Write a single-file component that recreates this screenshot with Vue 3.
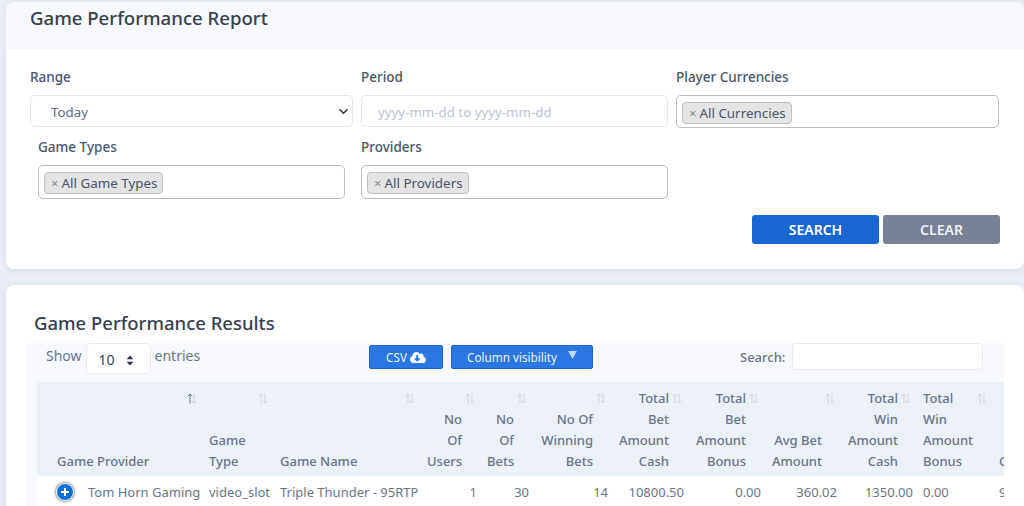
<script setup>
const columns = [
  { key: 'provider', lines: ['Game Provider'], cls: 'left first', active: true },
  { key: 'type', lines: ['Game', 'Type'], cls: 'left' },
  { key: 'name', lines: ['Game Name'], cls: 'left' },
  { key: 'users', lines: ['No', 'Of', 'Users'], cls: '' },
  { key: 'bets', lines: ['No', 'Of', 'Bets'], cls: '' },
  { key: 'winning', lines: ['No Of', 'Winning', 'Bets'], cls: '' },
  { key: 'betcash', lines: ['Total', 'Bet', 'Amount', 'Cash'], cls: '' },
  { key: 'betbonus', lines: ['Total', 'Bet', 'Amount', 'Bonus'], cls: '' },
  { key: 'avg', lines: ['Avg Bet', 'Amount'], cls: '' },
  { key: 'wincash', lines: ['Total', 'Win', 'Amount', 'Cash'], cls: '' },
  { key: 'winbonus', lines: ['Total', 'Win', 'Amount', 'Bonus'], cls: 'left' },
  { key: 'ggr', lines: ['GGR'], cls: 'left' }
]
const row = [
  { v: 'video_slot', cls: 'left' },
  { v: 'Triple Thunder - 95RTP', cls: 'left' },
  { v: '1', cls: '' },
  { v: '30', cls: '' },
  { v: '14', cls: '' },
  { v: '10800.50', cls: '' },
  { v: '0.00', cls: '' },
  { v: '360.02', cls: '' },
  { v: '1350.00', cls: '' },
  { v: '0.00', cls: 'left' },
  { v: '9450.50', cls: 'left' }
]
</script>

<template>
  <div class="page">
    <section class="card report">
      <header class="report-head"><h1>Game Performance Report</h1></header>
      <form class="filters" @submit.prevent>
        <div class="field">
          <label>Range</label>
          <div class="select-wrap">
            <select class="control range"><option>Today</option></select>
            <svg class="chevron" viewBox="0 0 12 8" width="11" height="7"><path d="M1.5 1.5 6 6l4.5-4.5" fill="none" stroke="#2b3445" stroke-width="1.8"/></svg>
          </div>
        </div>
        <div class="field">
          <label>Period</label>
          <input class="control period" placeholder="yyyy-mm-dd to yyyy-mm-dd" />
        </div>
        <div class="field">
          <label>Player Currencies</label>
          <div class="multi tall"><span class="chip"><i>×</i>All Currencies</span></div>
        </div>
        <div class="field inset">
          <label>Game Types</label>
          <div class="multi"><span class="chip"><i>×</i>All Game Types</span></div>
        </div>
        <div class="field">
          <label>Providers</label>
          <div class="multi"><span class="chip"><i>×</i>All Providers</span></div>
        </div>
      </form>
      <div class="actions">
        <button class="btn search">SEARCH</button>
        <button class="btn clear">CLEAR</button>
      </div>
    </section>

    <section class="card results">
      <h2>Game Performance Results</h2>
      <div class="table-box">
        <div class="tools">
          <div class="length">
            <span>Show</span>
            <div class="len-select">10
              <svg viewBox="0 0 8 12" width="8" height="11"><path d="M4 0.5 7.6 4.6H.4zM4 11.5.4 7.4h7.2z" fill="#2b3445"/></svg>
            </div>
            <span>entries</span>
          </div>
          <div class="tool-btns">
            <button class="tbtn csv">CSV
              <svg viewBox="0 0 640 512" width="16" height="13"><path fill="#fff" d="M537.6 226.6c4.1-10.7 6.4-22.4 6.4-34.6 0-53-43-96-96-96-19.7 0-38.1 6-53.3 16.2C367 64.2 315.3 32 256 32c-88.4 0-160 71.6-160 160 0 2.7.1 5.4.2 8.1C40.2 219.8 0 273.2 0 336c0 79.5 64.5 144 144 144h368c70.7 0 128-57.3 128-128 0-61.9-44-113.6-102.4-125.4zm-132.9 88.7L299.3 420.7c-6.2 6.2-16.4 6.2-22.6 0L171.3 315.3c-10.1-10.1-2.9-27.3 11.3-27.3H248V176c0-8.8 7.2-16 16-16h48c8.8 0 16 7.2 16 16v112h65.4c14.2 0 21.4 17.2 11.3 27.3z"/></svg>
            </button>
            <button class="tbtn vis">Column visibility
              <svg viewBox="0 0 10 9" width="9" height="8"><path d="M0 0h10L5 9z" fill="#c3d7f5"/></svg>
            </button>
          </div>
          <div class="table-search">
            <label>Search:</label>
            <input />
          </div>
        </div>
        <table>
          <colgroup>
            <col class="c1" /><col class="c2" /><col class="c3" /><col class="c4" /><col class="c5" /><col class="c6" />
            <col class="c7" /><col class="c8" /><col class="c9" /><col class="c10" /><col class="c11" /><col class="c12" />
          </colgroup>
          <thead>
            <tr>
              <th v-for="c in columns" :key="c.key" :class="c.cls">
                <span v-for="l in c.lines" :key="l" class="hl">{{ l }}</span>
                <svg class="sort" viewBox="0 0 10 11" width="10" height="11">
                  <path d="M3 10.5V1M.8 3.2 3 1l2.2 2.2" fill="none" :stroke="c.active ? '#69758a' : '#ccd3df'" stroke-width="1"/>
                  <path d="M7 .5V10M4.8 7.8 7 10l2.2-2.2" fill="none" stroke="#ccd3df" stroke-width="1"/>
                </svg>
              </th>
            </tr>
          </thead>
          <tbody>
            <tr>
              <td class="left provider"><span class="plus"></span>Tom Horn Gaming</td>
              <td v-for="(d, i) in row" :key="i" :class="d.cls">{{ d.v }}</td>
            </tr>
          </tbody>
        </table>
      </div>
    </section>
  </div>
</template>

<style>
html, body { margin: 0; background: #e9edf5; }
</style>

<style scoped>
* { box-sizing: border-box; }
.page {
  width: 1024px;
  height: 506px;
  overflow: hidden;
  padding: 2px 0 0 6px;
  background: #e9edf5;
  font-family: "Noto Sans", "Liberation Sans", sans-serif;
  color: #5f6b80;
}
.card {
  background: #fff;
  width: 1018px;
  border-radius: 8px;
  box-shadow: 0 2px 6px rgba(60, 75, 110, .10);
}
.report { height: 267px; }
.report-head {
  height: 48px;
  background: #f8f9fc;
  padding: 3px 24px 0;
  border-radius: 8px 8px 0 0;
}
h1 {
  margin: 0;
  font-size: 18.6px;
  line-height: 26px;
  font-weight: 500;
  color: #36404f;
}
.filters {
  display: grid;
  grid-template-columns: 323px 307px 323px;
  column-gap: 8px;
  row-gap: 2px;
  grid-template-rows: 68px 64px;
  padding: 17px 0 0 24px;
}
.field { min-width: 0; position: relative; }
.field label {
  display: block;
  font-size: 13.5px;
  line-height: 20px;
  font-weight: 500;
  color: #4a5568;
  margin-bottom: 8px;
}
.field.inset { margin: 0 8px; }
.select-wrap { position: relative; }
.chevron { position: absolute; right: 4px; top: 13px; }
.control {
  display: block;
  width: 100%;
  height: 32px;
  border: 1px solid #e2e7f2;
  border-radius: 5px;
  background: #fff;
  font-family: inherit;
  font-size: 13.3px;
  color: #5f6b80;
  outline: none;
}
.range { appearance: none; padding: 1px 0 0 20px; }
.period { padding: 1px 0 0 16px; }
.period::placeholder { color: #bcc3d2; opacity: 1; }
.multi {
  height: 34px;
  border: 1px solid #b9bdc4;
  border-radius: 5px;
  padding: 5px;
  background: #fff;
}
.multi.tall { height: 33px; }
.chip {
  display: inline-flex;
  align-items: center;
  height: 22px;
  padding: 0 5px 0 6px;
  background: #e4e4e4;
  border: 1px solid #bdbfc2;
  border-radius: 4px;
  font-size: 13.4px;
  color: #4a5568;
}
.chip i {
  font-style: normal;
  color: #858b95;
  font-size: 13px;
  margin-right: 3px;
}
.actions {
  display: flex;
  gap: 4px;
  margin-top: 14px;
  padding: 0 24px 0 746px;
  height: 29px;
}
.btn {
  height: 29px;
  border: 0;
  border-radius: 3px;
  color: #fff;
  font-family: inherit;
  font-size: 14px;
  font-weight: 600;
}
.search { width: 127px; background: #1a66d2; }
.clear { width: 117px; background: #788294; color: #eef0f4; }
.results { margin-top: 16px; height: 300px; padding-top: 26px; }
h2 {
  margin: 0 0 0 28px;
  font-size: 18.5px;
  line-height: 24px;
  font-weight: 500;
  color: #36404f;
}
.table-box {
  width: 978px;
  margin: 8px 0 0 20px;
  background: #f8f9fc;
  overflow: hidden;
  height: 163px;
}
.tools {
  height: 39px;
  position: relative;
  display: flex;
  font-size: 14px;
  color: #69758a;
}
.length {
  display: flex;
  align-items: flex-start;
  gap: 4px;
  width: 343px;
  padding-left: 20px;
  line-height: 26px;
}
.len-select {
  width: 65px;
  height: 31px;
  background: #fff;
  border: 1px solid #e6eaf3;
  border-radius: 5px;
  color: #3c4656;
  padding: 3px 0 0 12px;
  font-size: 14px;
  display: flex;
  gap: 11px;
  align-items: flex-start;
}
.len-select svg { margin-top: 8px; }
.tool-btns { display: flex; gap: 8px; padding-top: 2px; width: 370px; }
.tbtn {
  height: 24px;
  border: 1px solid #1a66d2;
  border-radius: 2px;
  background: #2a77e2;
  color: #eaf2fd;
  font-family: inherit;
  font-size: 11.7px;
  padding: 0;
  display: flex;
  align-items: center;
  justify-content: center;
}
.csv { width: 74px; gap: 3px; }
.vis { width: 142px; gap: 11px; padding-bottom: 1px; }
.vis svg { margin-top: -4px; }
.table-search { display: flex; gap: 7px; align-items: flex-start; margin-left: 1px; }
.table-search label { line-height: 28px; font-weight: 500; font-size: 13px; }
.table-search input {
  width: 191px;
  height: 27px;
  border: 1px solid #e6eaf3;
  border-radius: 4px;
  background: #fff;
  outline: none;
}
table {
  table-layout: fixed;
  width: 986px;
  margin-left: 11px;
  border-collapse: collapse;
  font-size: 13px;
}
.c1 { width: 166px; }
.c2 { width: 71px; }
.c3 { width: 147px; }
.c4 { width: 60px; }
.c5 { width: 52px; }
.c6 { width: 79px; }
.c7 { width: 76px; }
.c8 { width: 77px; }
.c9 { width: 76px; }
.c10 { width: 76px; }
.c11 { width: 76px; }
.c12 { width: 80px; }
thead tr { background: #ecf0f7; }
th {
  position: relative;
  height: 94px;
  padding: 5px 19px 4px 6px;
  vertical-align: bottom;
  text-align: right;
  font-weight: 500;
  font-size: 13px;
  line-height: 21px;
  color: #69758a;
}
th.left { text-align: left; padding-left: 6px; }
th.first { padding-left: 20px; }
.hl { display: block; white-space: nowrap; }
.sort { position: absolute; right: 6px; top: 11px; }
td {
  height: 32px;
  padding: 0 4px 0 6px;
  background: #fff;
  text-align: right;
  color: #69758a;
  white-space: nowrap;
  overflow: hidden;
}
td.left { text-align: left; }
td.provider { padding-left: 20px; overflow: visible; }
.plus {
  display: inline-block;
  position: relative;
  width: 16px;
  height: 16px;
  margin-right: 15px;
  vertical-align: -3px;
  border-radius: 50%;
  background: #0a6fd8;
  box-shadow: 0 0 0 1px #fff, 0 0 2px 2px #8a93a0;
}
.plus::before, .plus::after {
  content: "";
  position: absolute;
  background: #fff;
}
.plus::before { left: 4px; right: 4px; top: 7px; height: 2px; }
.plus::after { top: 4px; bottom: 4px; left: 7px; width: 2px; }
</style>
